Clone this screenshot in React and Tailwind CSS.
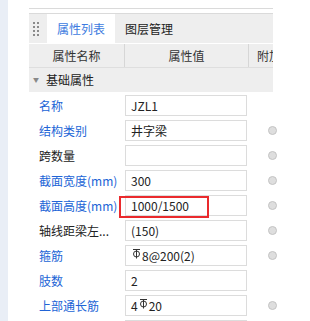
import React from "react";

const Rebar = () => (
  <svg width="9" height="10" viewBox="0 0 9 10" className="inline-block align-top mt-[-3px] mx-[1px]">
    <line x1="1" y1="0.5" x2="8" y2="0.5" stroke="#333" strokeWidth="1" />
    <circle cx="4.5" cy="5" r="3" fill="none" stroke="#333" strokeWidth="1" />
    <line x1="4.5" y1="0.5" x2="4.5" y2="9.5" stroke="#333" strokeWidth="1" />
  </svg>
);

const rows = [
  { label: "名称", blue: true, value: "JZL1", dot: false },
  { label: "结构类别", blue: true, value: "井字梁", dot: true },
  { label: "跨数量", blue: false, value: "", dot: true },
  { label: "截面宽度(mm)", blue: true, value: "300", dot: true },
  { label: "截面高度(mm)", blue: true, value: "1000/1500", dot: true },
  { label: "轴线距梁左...", blue: false, value: "(150)", dot: true },
  { label: "箍筋", blue: true, value: <><Rebar />8@200(2)</>, dot: true },
  { label: "肢数", blue: true, value: "2", dot: false },
  { label: "上部通长筋", blue: true, value: <>4<Rebar />20</>, dot: true },
  { label: "", blue: false, value: "", dot: false },
];

export default function App() {
  return (
    <div className="relative flex w-[310px] h-[321px] overflow-hidden bg-white text-[12px] text-[#333] font-['Noto_Sans_CJK_SC','Noto_Sans',sans-serif] leading-none">
      <div className="w-[8px] h-full shrink-0 bg-[#e9eef6]" />
      <div className="ml-[21px] w-[244px] shrink-0 flex flex-col">
        <div className="h-[8px] shrink-0" />
        <div className="h-px shrink-0 bg-[#dadada]" />
        <div className="h-[4px] shrink-0" />
        {/* tab bar */}
        <div className="h-[30px] shrink-0 bg-[#eeeeee] border-t border-[#dadada] flex items-stretch">
          <div className="w-[18px] flex items-center justify-center">
            <div className="grid grid-cols-2 gap-x-[2px] gap-y-[2px] ml-[-4px]">
              {Array.from({ length: 8 }).map((_, i) => (
                <div key={i} className="w-[2px] h-[2px] bg-[#8a8a8a]" />
              ))}
            </div>
          </div>
          <div className="w-[68px] bg-white flex items-center justify-center text-[#3d7be0]">属性列表</div>
          <div className="flex items-center pl-[10px] text-[#222]">图层管理</div>
        </div>
        <div className="h-px shrink-0 bg-white" />
        {/* header */}
        <div className="h-[23px] shrink-0 bg-[#eeeeee] flex items-center overflow-hidden text-[#333]">
          <div className="w-[95px] shrink-0 text-center">属性名称</div>
          <div className="w-px shrink-0 h-[23px] bg-[#d6d6d6]" />
          <div className="w-[123px] shrink-0 text-center">属性值</div>
          <div className="w-px shrink-0 h-[23px] bg-[#d6d6d6]" />
          <div className="pl-[8px] shrink-0 whitespace-nowrap">附加</div>
        </div>
        <div className="h-px shrink-0 bg-[#dedede]" />
        {/* group row */}
        <div className="h-[24px] shrink-0 bg-[#eeeeee] flex items-center">
          <span className="ml-[4px] text-[6px] text-[#888] leading-none">▼</span>
          <span className="ml-[7px] text-[#222]">基础属性</span>
        </div>
        {/* rows */}
        <div className="pt-[1px] shrink-0 flex flex-col">
          {rows.map((r, i) => (
            <div key={i} className="h-[25px] shrink-0 flex items-center">
              <div
                className={`w-[96px] pl-[10px] whitespace-nowrap ${r.blue ? "text-[#2164d6]" : "text-[#222]"}`}
              >
                {r.label}
              </div>
              <div className="w-[122px] h-[21px] border border-[#dcdcdc] bg-white flex items-center pl-[5px] whitespace-nowrap text-[#222]">
                {r.value}
              </div>
              <div className="w-[26px] flex justify-end">
                {r.dot && (
                  <div className="w-[9px] h-[9px] rounded-full bg-[#dedede] border border-[#c4c4c4] mr-[-4px]" />
                )}
              </div>
            </div>
          ))}
        </div>
      </div>
      <div className="absolute left-[119px] top-[196px] w-[90px] h-[22px] border-2 border-[#ea2a2d]" />
    </div>
  );
}
